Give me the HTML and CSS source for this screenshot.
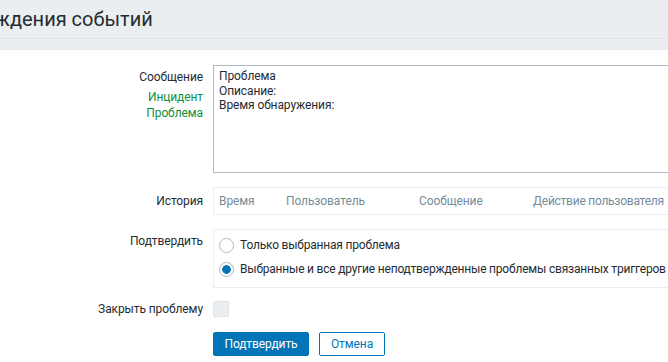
FILE: index.html
```html
<!DOCTYPE html>
<html lang="ru">
<head>
<meta charset="utf-8">
<link rel="stylesheet" href="styles.css">
</head>
<body>
<header class="header">
  <h1 class="title"><span class="title-inner">Подтверждения событий</span></h1>
</header>
<div class="subbar"></div>
<form class="form">
  <div class="row">
    <div class="label">
      <div>Сообщение</div>
      <a class="link link-first">Инцидент</a>
      <a class="link">Проблема</a>
    </div>
    <div class="field">
      <div class="textarea">Проблема
Описание:
Время обнаружения:</div>
    </div>
  </div>
  <div class="row row-history">
    <div class="label label-mid">История</div>
    <div class="field">
      <div class="history">
        <span class="h-col h-time">Время</span>
        <span class="h-col h-user">Пользователь</span>
        <span class="h-col h-msg">Сообщение</span>
        <span class="h-col h-act">Действие пользователя</span>
      </div>
    </div>
  </div>
  <div class="row row-ack">
    <div class="label label-top">Подтвердить</div>
    <div class="field">
      <div class="radios">
        <label class="radio"><span class="r-dot"></span>Только выбранная проблема</label>
        <label class="radio"><span class="r-dot checked"></span>Выбранные и все другие неподтвержденные проблемы связанных триггеров</label>
      </div>
    </div>
  </div>
  <div class="row row-close">
    <div class="label label-mid">Закрыть проблему</div>
    <div class="field"><span class="checkbox"></span></div>
  </div>
  <div class="row row-buttons">
    <div class="label"></div>
    <div class="field buttons">
      <button type="button" class="btn btn-primary">Подтвердить</button>
      <button type="button" class="btn btn-alt">Отмена</button>
    </div>
  </div>
</form>
</body>
</html>
```
FILE: styles.css
```css
html, body {
  margin: 0;
  padding: 0;
  overflow: hidden;
  background: #ffffff;
}
body {
  width: 668px;
  height: 362px;
  font-family: Roboto, "Liberation Sans", Arial, sans-serif;
  font-size: 12px;
  letter-spacing: -0.1px;
  color: #1f2c33;
}
.header {
  height: 38px;
  background: #ebeef0;
  border-bottom: 1px solid #dfe4e7;
  overflow: hidden;
}
.title {
  margin: 0;
  font-weight: normal;
  font-size: 20px;
  letter-spacing: 0;
  line-height: 38px;
  white-space: nowrap;
  color: #1f2c33;
  overflow: hidden;
}
.title-inner {
  display: inline-block;
  margin-left: -85px;
}
.subbar {
  height: 10px;
  background: #ebeef0;
  border-bottom: 1px solid #e6eaec;
}
.form {
  padding-top: 15px;
}
.row {
  display: grid;
  grid-template-columns: 203px 1fr;
  column-gap: 10px;
  margin-bottom: 14px;
}
.label {
  text-align: right;
  line-height: 16px;
  padding-top: 4px;
}
.label .link {
  display: block;
  color: #0f8f3c;
  text-decoration: none;
}
.label .link-first {
  margin-top: 4px;
}
.label-mid {
  align-self: center;
  padding-top: 0;
}
.label-top {
  padding-top: 4px;
}
.field {
  min-width: 0;
}
.textarea {
  box-sizing: border-box;
  height: 108px;
  width: 480px;
  border: 1px solid #acbbc2;
  padding: 3px 5px;
  white-space: pre;
  line-height: 14.5px;
}
.history {
  box-sizing: border-box;
  height: 28px;
  width: 480px;
  border: 1px solid #ebeef0;
  display: flex;
  align-items: center;
  color: #768d99;
  white-space: nowrap;
}
.h-col { display: inline-block; }
.h-time { margin-left: 5px; width: 67px; }
.h-user { width: 133px; }
.h-msg { width: 114px; }
.h-act { letter-spacing: -0.25px; }
.row-ack { margin-bottom: 13px; }
.radios {
  box-sizing: border-box;
  width: 480px;
  height: 59px;
  border: 1px solid #ebeef0;
  padding: 7px 0 0 5px;
  white-space: nowrap;
  letter-spacing: -0.2px;
}
.radio {
  display: flex;
  align-items: center;
  height: 16px;
  margin-bottom: 8px;
}
.r-dot {
  box-sizing: border-box;
  width: 15px;
  height: 15px;
  border-radius: 50%;
  border: 1px solid #acbbc2;
  background: #fff;
  margin-right: 6px;
  flex: none;
}
.r-dot.checked {
  background: radial-gradient(circle, #0275b8 0, #0275b8 4px, #fff 4.6px);
}
.row-close { margin-bottom: 15px; }
.checkbox {
  display: block;
  box-sizing: border-box;
  width: 16px;
  height: 16px;
  border: 1px solid #dfe4e7;
  border-radius: 2px;
  background: #ebeef0;
}
.buttons {
  display: flex;
  gap: 10px;
}
.btn {
  box-sizing: border-box;
  height: 24px;
  font-family: inherit;
  font-size: 12px;
  letter-spacing: -0.1px;
  border-radius: 2px;
  padding: 0 6px;
  margin: 0;
}
.btn-primary {
  width: 96px;
  background: #0275b8;
  border: 1px solid #0275b8;
  color: #fff;
}
.btn-alt {
  width: 66px;
  background: #fff;
  border: 1px solid #0275b8;
  color: #0275b8;
}
```
